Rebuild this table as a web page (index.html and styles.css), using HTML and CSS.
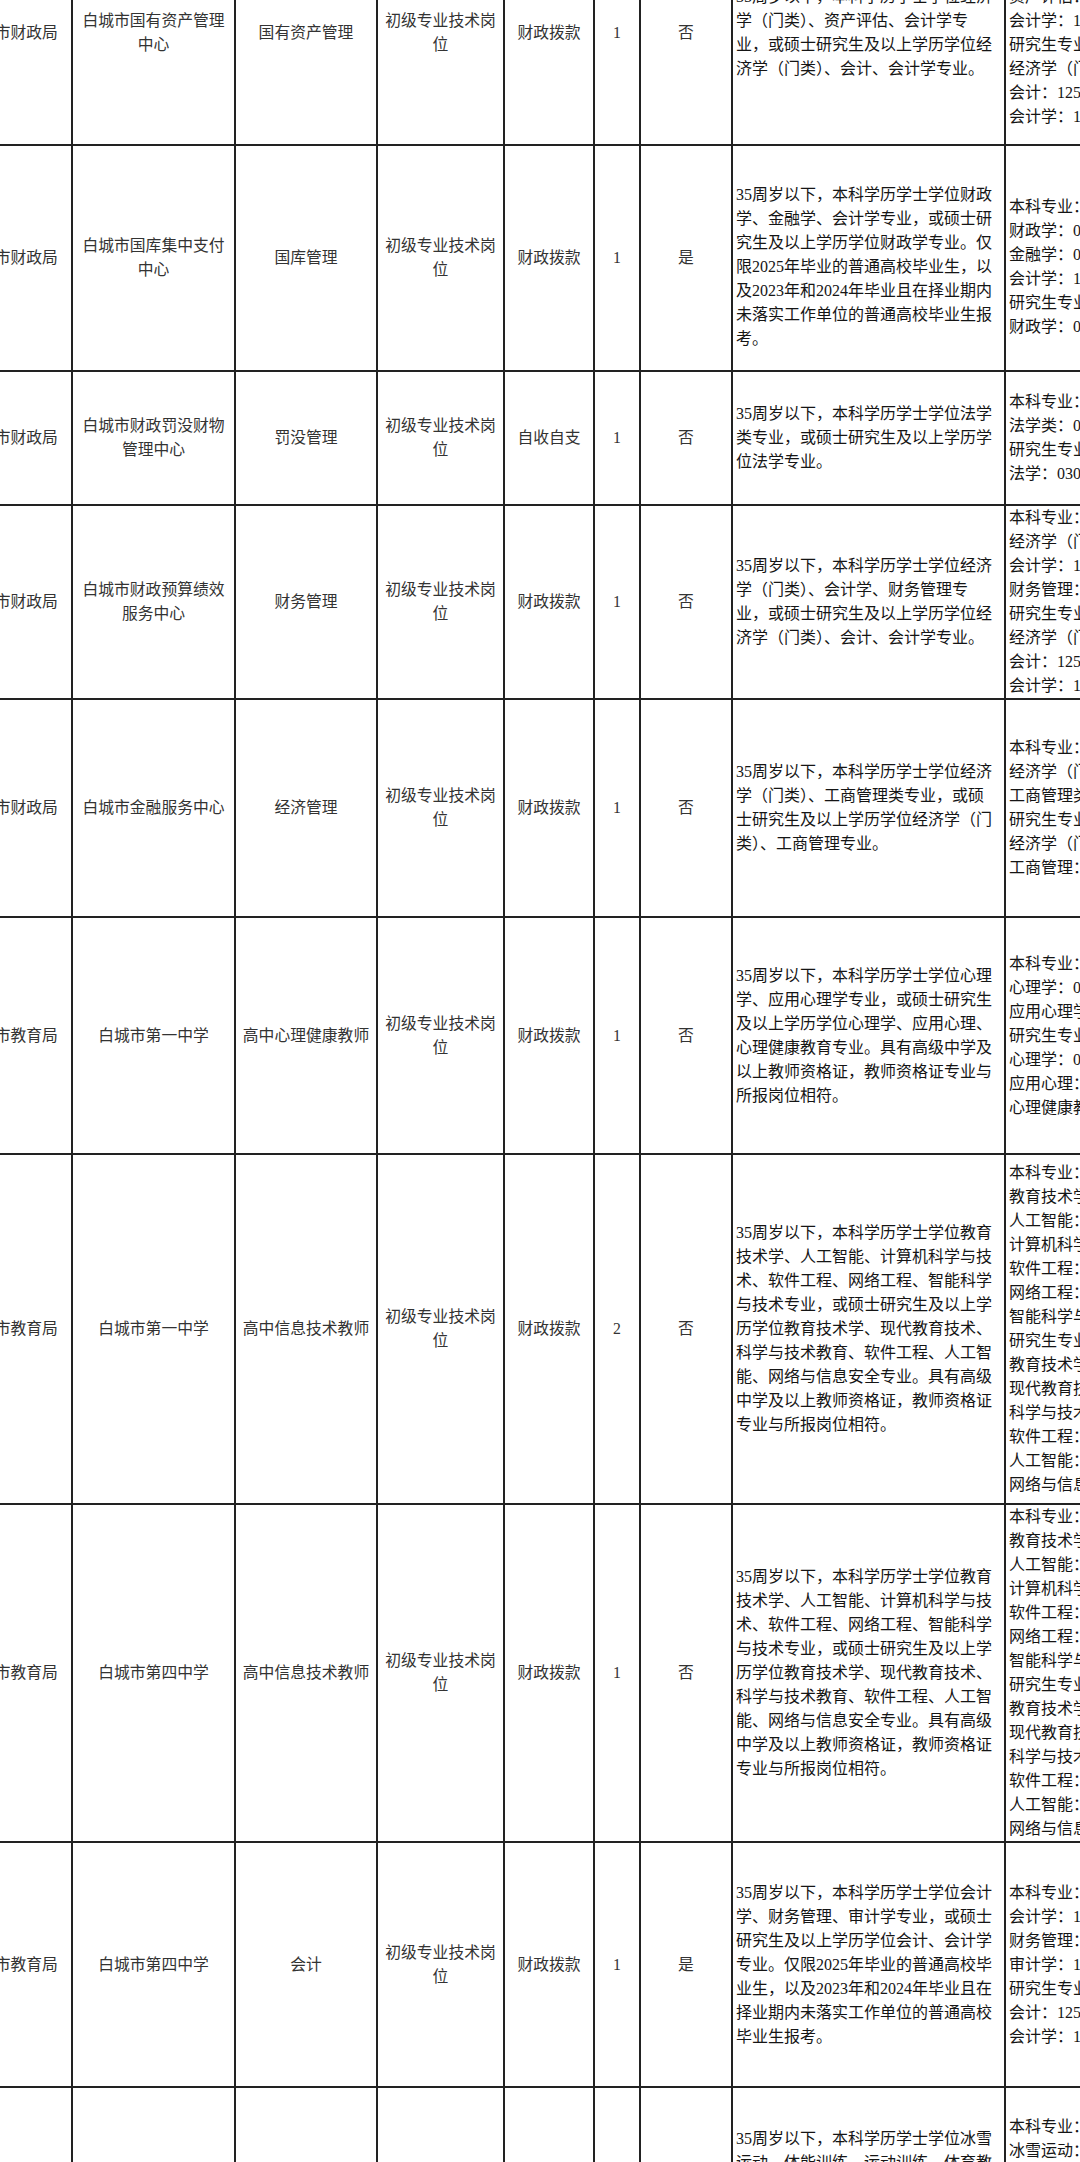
FILE: index.html
```html
<!DOCTYPE html>
<html lang="zh-CN">
<head>
<meta charset="utf-8">
<title>白城市事业单位招聘岗位表</title>
<link rel="stylesheet" href="styles.css">
</head>
<body>
<div class="sheet">
<table class="grid">
<colgroup>
<col class="c1"><col class="c2"><col class="c3"><col class="c4"><col class="c5"><col class="c6"><col class="c7"><col class="c8"><col class="c9">
</colgroup>
<tbody>
<tr class="r1">
<td>白城市财政局</td>
<td>白城市国有资产管理<br>中心</td>
<td>国有资产管理</td>
<td>初级专业技术岗<br>位</td>
<td>财政拨款</td>
<td>1</td>
<td>否</td>
<td class="req">35周岁以下，本科学历学士学位经济<br>学（门类）、资产评估、会计学专<br>业，或硕士研究生及以上学历学位经<br>济学（门类）、会计、会计学专业。</td>
<td class="major">本科专业：<br>经济学（门类）：02<br>资产评估：120208<br>会计学：120203K<br>研究生专业：<br>经济学（门类）：02<br>会计：1253<br>会计学：120201</td>
</tr>
<tr class="r2">
<td>白城市财政局</td>
<td>白城市国库集中支付<br>中心</td>
<td>国库管理</td>
<td>初级专业技术岗<br>位</td>
<td>财政拨款</td>
<td>1</td>
<td>是</td>
<td class="req shift">35周岁以下，本科学历学士学位财政<br>学、金融学、会计学专业，或硕士研<br>究生及以上学历学位财政学专业。仅<br>限2025年毕业的普通高校毕业生，以<br>及2023年和2024年毕业且在择业期内<br>未落实工作单位的普通高校毕业生报<br>考。</td>
<td class="major shift">本科专业：<br>财政学：020201K<br>金融学：020301K<br>会计学：120203K<br>研究生专业：<br>财政学：020203</td>
</tr>
<tr class="r3">
<td>白城市财政局</td>
<td>白城市财政罚没财物<br>管理中心</td>
<td>罚没管理</td>
<td>初级专业技术岗<br>位</td>
<td>自收自支</td>
<td>1</td>
<td>否</td>
<td class="req">35周岁以下，本科学历学士学位法学<br>类专业，或硕士研究生及以上学历学<br>位法学专业。</td>
<td class="major">本科专业：<br>法学类：0301<br>研究生专业：<br>法学：0301</td>
</tr>
<tr class="r4">
<td>白城市财政局</td>
<td>白城市财政预算绩效<br>服务中心</td>
<td>财务管理</td>
<td>初级专业技术岗<br>位</td>
<td>财政拨款</td>
<td>1</td>
<td>否</td>
<td class="req">35周岁以下，本科学历学士学位经济<br>学（门类）、会计学、财务管理专<br>业，或硕士研究生及以上学历学位经<br>济学（门类）、会计、会计学专业。</td>
<td class="major">本科专业：<br>经济学（门类）：02<br>会计学：120203K<br>财务管理：120204<br>研究生专业：<br>经济学（门类）：02<br>会计：1253<br>会计学：120201</td>
</tr>
<tr class="r5">
<td>白城市财政局</td>
<td>白城市金融服务中心</td>
<td>经济管理</td>
<td>初级专业技术岗<br>位</td>
<td>财政拨款</td>
<td>1</td>
<td>否</td>
<td class="req">35周岁以下，本科学历学士学位经济<br>学（门类）、工商管理类专业，或硕<br>士研究生及以上学历学位经济学（门<br>类）、工商管理专业。</td>
<td class="major">本科专业：<br>经济学（门类）：02<br>工商管理类：1202<br>研究生专业：<br>经济学（门类）：02<br>工商管理：1202</td>
</tr>
<tr class="r6">
<td>白城市教育局</td>
<td>白城市第一中学</td>
<td>高中心理健康教师</td>
<td>初级专业技术岗<br>位</td>
<td>财政拨款</td>
<td>1</td>
<td>否</td>
<td class="req">35周岁以下，本科学历学士学位心理<br>学、应用心理学专业，或硕士研究生<br>及以上学历学位心理学、应用心理、<br>心理健康教育专业。具有高级中学及<br>以上教师资格证，教师资格证专业与<br>所报岗位相符。</td>
<td class="major">本科专业：<br>心理学：071101<br>应用心理学：071102<br>研究生专业：<br>心理学：0402<br>应用心理：0454<br>心理健康教育：045116</td>
</tr>
<tr class="r7">
<td>白城市教育局</td>
<td>白城市第一中学</td>
<td>高中信息技术教师</td>
<td>初级专业技术岗<br>位</td>
<td>财政拨款</td>
<td>2</td>
<td>否</td>
<td class="req">35周岁以下，本科学历学士学位教育<br>技术学、人工智能、计算机科学与技<br>术、软件工程、网络工程、智能科学<br>与技术专业，或硕士研究生及以上学<br>历学位教育技术学、现代教育技术、<br>科学与技术教育、软件工程、人工智<br>能、网络与信息安全专业。具有高级<br>中学及以上教师资格证，教师资格证<br>专业与所报岗位相符。</td>
<td class="major">本科专业：<br>教育技术学：040104<br>人工智能：080717T<br>计算机科学与技术：080901<br>软件工程：080902<br>网络工程：080903<br>智能科学与技术：080907T<br>研究生专业：<br>教育技术学：078401<br>现代教育技术：045114<br>科学与技术教育：045117<br>软件工程：0835<br>人工智能：0812<br>网络与信息安全：0839</td>
</tr>
<tr class="r8">
<td>白城市教育局</td>
<td>白城市第四中学</td>
<td>高中信息技术教师</td>
<td>初级专业技术岗<br>位</td>
<td>财政拨款</td>
<td>1</td>
<td>否</td>
<td class="req">35周岁以下，本科学历学士学位教育<br>技术学、人工智能、计算机科学与技<br>术、软件工程、网络工程、智能科学<br>与技术专业，或硕士研究生及以上学<br>历学位教育技术学、现代教育技术、<br>科学与技术教育、软件工程、人工智<br>能、网络与信息安全专业。具有高级<br>中学及以上教师资格证，教师资格证<br>专业与所报岗位相符。</td>
<td class="major">本科专业：<br>教育技术学：040104<br>人工智能：080717T<br>计算机科学与技术：080901<br>软件工程：080902<br>网络工程：080903<br>智能科学与技术：080907T<br>研究生专业：<br>教育技术学：078401<br>现代教育技术：045114<br>科学与技术教育：045117<br>软件工程：0835<br>人工智能：0812<br>网络与信息安全：0839</td>
</tr>
<tr class="r9">
<td>白城市教育局</td>
<td>白城市第四中学</td>
<td>会计</td>
<td>初级专业技术岗<br>位</td>
<td>财政拨款</td>
<td>1</td>
<td>是</td>
<td class="req">35周岁以下，本科学历学士学位会计<br>学、财务管理、审计学专业，或硕士<br>研究生及以上学历学位会计、会计学<br>专业。仅限2025年毕业的普通高校毕<br>业生，以及2023年和2024年毕业且在<br>择业期内未落实工作单位的普通高校<br>毕业生报考。</td>
<td class="major">本科专业：<br>会计学：120203K<br>财务管理：120204<br>审计学：120207<br>研究生专业：<br>会计：1253<br>会计学：120201</td>
</tr>
<tr class="r10">
<td>白城市教育局</td>
<td>白城市第四中学</td>
<td>高中体育教师</td>
<td>初级专业技术岗<br>位</td>
<td>财政拨款</td>
<td>1</td>
<td>否</td>
<td class="req">35周岁以下，本科学历学士学位冰雪<br>运动、体能训练、运动训练、体育教<br>育专业，或硕士研究生及以上学历学<br>位体育学、体育教学、运动训练专<br>业。具有高级中学及以上教师资格<br>证，教师资格证专业与所报岗位相<br>符。具有二级及以上运动员等级证<br>书。</td>
<td class="major">本科专业：<br>冰雪运动：040212TK<br>体能训练：040211TK<br>运动训练：040202K<br>体育教育：040201<br>研究生专业：<br>体育学：0403<br>体育教学：045201<br>运动训练：045202</td>
</tr>
</tbody>
</table>
</div>
</body>
</html>
```

FILE: styles.css
```css
html, body {
  margin: 0;
  padding: 0;
  background: #ffffff;
}

.sheet {
  width: 1080px;
  height: 2162px;
  overflow: hidden;
  background: #ffffff;
}

.grid {
  border-collapse: collapse;
  table-layout: fixed;
  width: 1276px;
  margin: -80px 0 0 -52px;
  font-family: "Liberation Serif", "Noto Sans CJK SC", serif;
}

.c1 { width: 123px; }
.c2 { width: 163px; }
.c3 { width: 142px; }
.c4 { width: 127px; }
.c5 { width: 90px; }
.c6 { width: 46px; }
.c7 { width: 92px; }
.c8 { width: 273px; }
.c9 { width: 220px; }

.grid td {
  border: 2px solid #222222;
  padding: 0 3px;
  vertical-align: middle;
  text-align: center;
  line-height: 24px;
  font-size: 15.8px;
  color: #333333;
  white-space: nowrap;
  overflow: hidden;
}

.grid td.req,
.grid td.major {
  text-align: left;
  font-size: 16px;
  color: #151515;
}

.grid td.shift {
  padding-top: 18px;
}

.r1 { height: 224px; }
.r2 { height: 226px; }
.r3 { height: 134px; }
.r4 { height: 193px; }
.r5 { height: 218px; }
.r6 { height: 237px; }
.r7 { height: 350px; }
.r8 { height: 338px; }
.r9 { height: 245px; }
.r10 { height: 272px; }
```
